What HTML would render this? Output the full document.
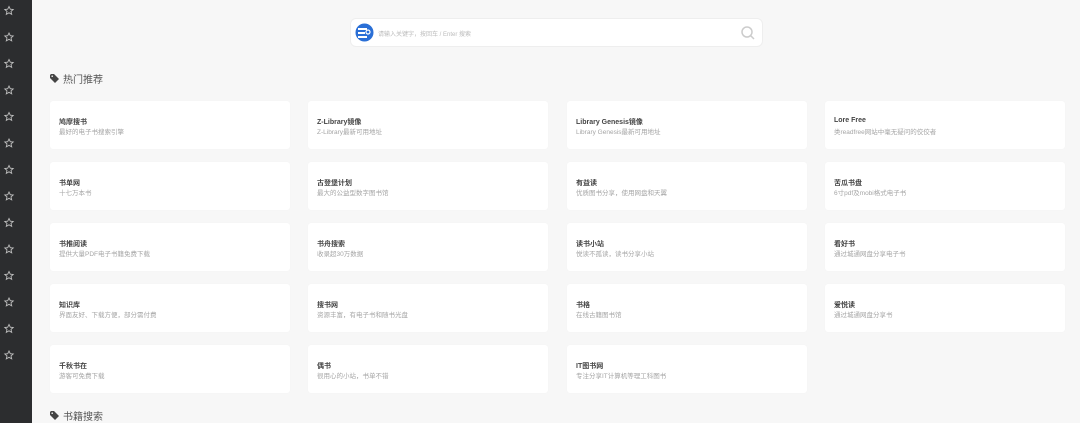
<!DOCTYPE html>
<html><head><meta charset="utf-8"><style>
*{margin:0;padding:0;box-sizing:border-box}
html,body{width:1080px;height:423px;overflow:hidden}
body{background:#f7f7f7;font-family:"Liberation Sans","Noto Sans CJK SC",sans-serif;position:relative}
.side{position:absolute;left:0;top:0;width:32px;height:423px;background:#2c2d2f}
.search{position:absolute;left:350px;top:18px;width:413px;height:29px;background:#fff;border-radius:6px;border:1px solid #eee}
.search .ph{position:absolute;left:27px;top:10px;font-size:6px;color:#bbb}
h3{position:absolute;left:50px;font-size:10px;font-weight:normal;color:#555;display:flex;align-items:center;gap:4px}
.card{position:absolute;width:240px;height:48px;background:#fff;border-radius:3px;box-shadow:0 0 1px rgba(0,0,0,.05)}
.card b{position:absolute;left:9px;top:16px;font-size:7px;color:#444;font-weight:bold;white-space:nowrap}
.card i{position:absolute;left:9px;top:25px;font-size:6.5px;color:#a5a5a5;font-style:normal;white-space:nowrap}
</style></head><body>
<div class="side">
<svg width="32" height="423" viewBox="0 0 32 423" fill="none" stroke="#bbb" stroke-width="0.9">
<g id="s"><path d="M9 6.5 L10.3 9.2 L13.2 9.5 L11 11.4 L11.7 14.3 L9 12.8 L6.3 14.3 L7 11.4 L4.8 9.5 L7.7 9.2 Z"/></g>
<use href="#s" y="26.5"/><use href="#s" y="53"/><use href="#s" y="79.5"/><use href="#s" y="106"/><use href="#s" y="132.5"/><use href="#s" y="159"/><use href="#s" y="185.5"/><use href="#s" y="212"/><use href="#s" y="238.5"/><use href="#s" y="265"/><use href="#s" y="291.5"/><use href="#s" y="318"/><use href="#s" y="344.5"/>
</svg></div>
<div class="search">
<svg style="position:absolute;left:4px;top:4px" width="19" height="19" viewBox="0 0 19 19"><circle cx="9.5" cy="9.5" r="9" fill="#2a6fd6"/><rect x="3" y="5" width="9" height="2" fill="#fff"/><rect x="3" y="9" width="7" height="2" fill="#fff"/><rect x="3" y="13" width="9" height="2" fill="#fff"/><circle cx="13" cy="9" r="2" fill="none" stroke="#fff" stroke-width="1.2"/></svg>
<span class="ph">请输入关键字，按回车 / Enter 搜索</span>
<svg style="position:absolute;right:6px;top:6px" width="16" height="16" viewBox="0 0 16 16" fill="none" stroke="#ccc" stroke-width="1.5"><circle cx="7" cy="7" r="5"/><path d="M10.5 10.5 L14 14"/></svg>
</div>
<h3 style="top:71px"><svg width="9" height="9" viewBox="0 0 9 9"><path d="M0 1 V4 L5 9 L9 5 L4 0 H1 Z" fill="#444"/><circle cx="2.2" cy="2.2" r=".8" fill="#f7f7f7"/></svg>热门推荐</h3>
<h3 style="top:408px"><svg width="9" height="9" viewBox="0 0 9 9"><path d="M0 1 V4 L5 9 L9 5 L4 0 H1 Z" fill="#444"/><circle cx="2.2" cy="2.2" r=".8" fill="#f7f7f7"/></svg>书籍搜索</h3>

<div class="card" style="left:50px;top:101px"><b>鸠摩搜书</b><i>最好的电子书搜索引擎</i></div>
<div class="card" style="left:308px;top:101px"><b>Z-Library镜像</b><i>Z-Library最新可用地址</i></div>
<div class="card" style="left:567px;top:101px"><b>Library Genesis镜像</b><i>Library Genesis最新可用地址</i></div>
<div class="card" style="left:825px;top:101px"><b>Lore Free</b><i>类readfree网站中毫无疑问的佼佼者</i></div>

<div class="card" style="left:50px;top:162px"><b>书单网</b><i>十七万本书</i></div>
<div class="card" style="left:308px;top:162px"><b>古登堡计划</b><i>最大的公益型数字图书馆</i></div>
<div class="card" style="left:567px;top:162px"><b>有益读</b><i>优质图书分享，使用网盘和天翼</i></div>
<div class="card" style="left:825px;top:162px"><b>苦瓜书盘</b><i>6寸pdf及mobi格式电子书</i></div>

<div class="card" style="left:50px;top:223px"><b>书推阅读</b><i>提供大量PDF电子书籍免费下载</i></div>
<div class="card" style="left:308px;top:223px"><b>书舟搜索</b><i>收录超30万数据</i></div>
<div class="card" style="left:567px;top:223px"><b>读书小站</b><i>悦读不孤读，读书分享小站</i></div>
<div class="card" style="left:825px;top:223px"><b>看好书</b><i>通过城通网盘分享电子书</i></div>

<div class="card" style="left:50px;top:284px"><b>知识库</b><i>界面友好、下载方便，部分需付费</i></div>
<div class="card" style="left:308px;top:284px"><b>搜书网</b><i>资源丰富，有电子书和随书光盘</i></div>
<div class="card" style="left:567px;top:284px"><b>书格</b><i>在线古籍图书馆</i></div>
<div class="card" style="left:825px;top:284px"><b>爱悦读</b><i>通过城通网盘分享书</i></div>

<div class="card" style="left:50px;top:345px"><b>千秋书在</b><i>游客可免费下载</i></div>
<div class="card" style="left:308px;top:345px"><b>偶书</b><i>很用心的小站，书单不错</i></div>
<div class="card" style="left:567px;top:345px"><b>IT图书网</b><i>专注分享IT计算机等理工科图书</i></div>
</body></html>
